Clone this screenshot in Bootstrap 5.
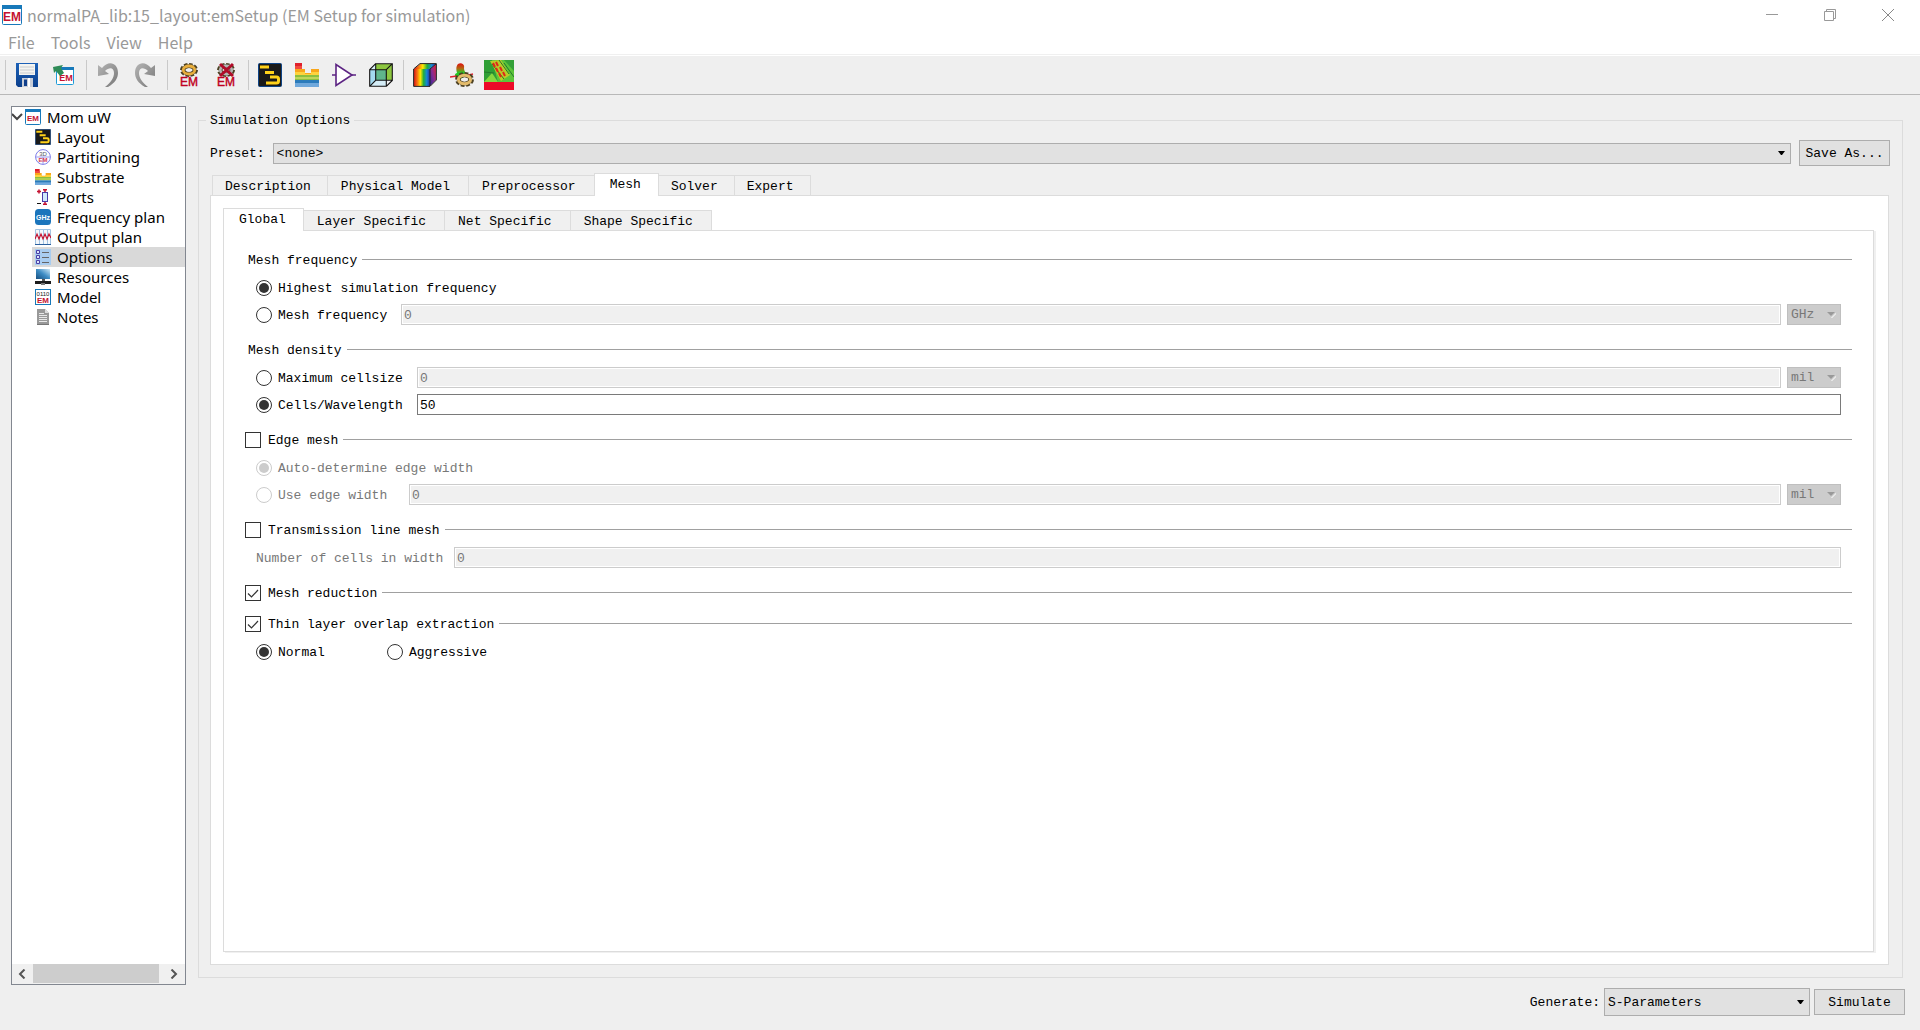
<!DOCTYPE html>
<html lang="en">
<head>
<meta charset="utf-8">
<meta name="viewport" content="width=device-width, initial-scale=1">
<title>normalPA_lib:15_layout:emSetup (EM Setup for simulation)</title>
<link href="https://cdn.jsdelivr.net/npm/bootstrap@5.3.0/dist/css/bootstrap.min.css" rel="stylesheet">
<style>
  :root { --face: #efefef; --edge: #dcdcdc; --ctl: #e1e1e1; --ctl-edge: #adadad; }
  body { background: var(--face); color: #000; font-family: "Noto Sans", "Noto Sans CJK SC", sans-serif; font-size: 15px; line-height: 20px; }
  a { color: inherit; text-decoration: none; }
  svg { display: block; flex: none; }
  svg text { font-family: "Liberation Sans", sans-serif; }

  .titlebar { height: 29px; color: #999; background: #fff; padding: 0 3px 0 2px; gap: 5px; }
  .titlebar, .menubar { font-family: "Noto Sans CJK SC", "Noto Sans", sans-serif; font-size: 16px; }
  .winbtn { width: 58px; height: 28px; border: 0; background: none; color: #999; padding: 0; }
  .menubar { height: 25px; background: #fff; color: #999; padding-left: 8px; gap: 16px; line-height: 26px; }
  .toolstrip { height: 41px; border-top: 1px solid #f0f0f0; border-bottom: 1px solid #b8b8b8; box-shadow: inset 0 1px #fff; padding-left: 5px; }
  .toolstrip .tool { width: 37px; height: 32px; border: 0; background: none; padding: 0; display: flex; align-items: center; justify-content: center; }
  .toolstrip .rule { width: 1px; height: 30px; background: #c9c9c9; margin: 0 2px 0 4px; }
  .toolstrip .rule:first-child { margin-left: 0; }

  .workarea { padding: 11px 15px 14px 11px; gap: 12px; }
  .treebox { width: 175px; background: #fff; border: 1px solid #828790; margin-bottom: 31px; }
  .treebox a, .treebox .root { height: 20px; display: flex; align-items: center; gap: 6px; white-space: nowrap; }
  .treebox .root { gap: 0; }
  .treebox .root svg + svg { margin: 0 6px 0 2px; }
  .treebox a { margin-left: 20px; padding-left: 3px; }
  .treebox a.current { background: #d9d9d9; }
  .hscroll { height: 20px; background: #f0f0f0; }
  .hscroll button { width: 21px; border: 0; background: none; padding: 0 2px 0 0; display: flex; align-items: center; justify-content: center; }
  .hscroll .thumb { background: #cdcdcd; width: 126px; height: 19px; }

  .pixelfont, .pixelfont input, .pixelfont select, .pixelfont button { font-family: "Liberation Mono", "Noto Sans CJK SC", monospace; font-size: 13px; line-height: 18px; }
  fieldset.groupbox { border: 1px solid var(--edge); padding: 0 12px 12px 11px; margin-top: 4px; margin-right: 2px; min-width: 0; }
  .groupbox > legend { float: none; width: auto; font-size: 13px; line-height: 18px; padding: 2px 4px 0; margin: 0 0 10px -4px; }
  .combo { appearance: none; border: 1px solid var(--ctl-edge); border-radius: 0; height: 21px; padding: 1px 16px 0 3px; color: #000;
    background: var(--ctl) url("data:image/svg+xml,%3Csvg xmlns='http://www.w3.org/2000/svg' width='7' height='4'%3E%3Cpath d='M0 0H7L4 4H3Z'/%3E%3C/svg%3E") no-repeat right 5px center; }
  .combo:disabled { background-color: #ccc; border-color: #bfbfbf; color: #787878; opacity: 1; background-image: url("data:image/svg+xml,%3Csvg xmlns='http://www.w3.org/2000/svg' width='9' height='6'%3E%3Cpath d='M4 6L9 1V2L5 6Z' fill='white'/%3E%3Cpath d='M0 0H8L4 4Z' fill='%23999'/%3E%3C/svg%3E"); background-position: right 4px center; }
  .combo.generate { width: 206px; height: 28px; }
  .combo.unit { width: 54px; margin-left: 6px; flex: none; }
  .pushbtn { width: 91px; height: 26px; padding: 2px 0 0; border: 1px solid var(--ctl-edge); background: var(--ctl); color: #000; border-radius: 0; }
  .pixelfont label, .headline span { padding-top: 2px; }

  .tabstrip { border: 0; height: 22px; align-items: flex-end; }
  .tabstrip.outer { margin-top: 7px; padding-left: 2px; }
  .tabstrip .nav-link { border: 1px solid var(--edge); border-bottom: 0; border-radius: 0; background: #f0f0f0; color: #000; padding: 2px 16px 0 12px; height: 20px; margin: 0 0 0 -1px; font-size: 13px; line-height: 18px; }
  .tabstrip .nav-item:first-child .nav-link { margin-left: 0; }
  .tabstrip .nav-link.wide { padding-left: 13px; padding-right: 18px; }
  .tabstrip .nav-link.active { background: #fff; padding: 2px 17px 0 15px; height: 23px; margin-bottom: -1px; position: relative; border-color: var(--edge); }
  .sheet { background: #fff; border: 1px solid var(--edge); }
  .sheet.outer { padding: 12px; margin-right: 1px; }
  .sheet.inner { padding: 20px 21px 0 21px; margin-right: 2px; box-shadow: 2px 1px #f0f0f0; }

  .optgroup { margin-bottom: 13px; }
  .headline { height: 18px; }
  .headline::after { content: ""; flex: 1; height: 1px; background: #a0a0a0; margin: 0 0 1px 5px; }
  .headline.plain { padding-left: 3px; }
  .optrows { padding: 5px 11px 0 11px; }
  .optline { height: 27px; display: flex; align-items: center; }
  .optline label { padding-left: 6px; }
  .optline.off { color: #787878; }
  .len-freq { width: 129px; } .len-cell { width: 145px; } .len-edge { width: 137px; }
  .optline .len-num { width: 198px; padding-left: 0; }
  .len-mode { width: 115px; }
  .field { flex: 1; min-width: 0; height: 21px; border: 1px solid #7a7a7a; border-radius: 0; padding: 1px 2px 0; background: #fff; color: #000; }
  .field:disabled { background: #f0f0f0; border-color: #ccc; box-shadow: inset 0 0 0 1px #fff; color: #787878; }
  .mark-in.form-check-input { width: 16px; height: 16px; margin: 0; flex: none; border: 1px solid #333; background-color: #fff; box-shadow: none; }
  .mark-in[type=checkbox] { border-radius: 0; }
  .headline .mark-in + label { padding-left: 7px; }
  .mark-in[type=radio]:checked { background-color: #fff; background-size: 16px 16px; background-position: center; background-image: url("data:image/svg+xml,%3Csvg xmlns='http://www.w3.org/2000/svg' viewBox='0 0 16 16'%3E%3Ccircle cx='8' cy='8' r='5' fill='%23333'/%3E%3C/svg%3E"); }
  .mark-in[type=checkbox]:checked { background-color: #fff; border-color: #333; background-size: 14px 14px; background-image: url("data:image/svg+xml,%3Csvg xmlns='http://www.w3.org/2000/svg' viewBox='0 0 14 14'%3E%3Cpath d='M2 7.5L5.5 11L12 4' fill='none' stroke='%23333' stroke-width='1.2'/%3E%3C/svg%3E"); }
  .mark-in.form-check-input:disabled { border-color: #ccc; opacity: 1; }
  .mark-in[type=radio]:checked:disabled { background-image: url("data:image/svg+xml,%3Csvg xmlns='http://www.w3.org/2000/svg' viewBox='0 0 16 16'%3E%3Ccircle cx='8' cy='8' r='5' fill='%23ccc'/%3E%3C/svg%3E"); }
  .footbar { margin-top: 10px; gap: 4px; }
</style>
</head>
<body class="min-vh-100 d-flex flex-column">

<svg width="0" height="0" class="position-absolute" aria-hidden="true">
  <defs>
    <linearGradient id="g-blue" x2="0" y2="1"><stop stop-color="#1d62b8"/><stop offset="1" stop-color="#0b3f8c"/></linearGradient>
    <linearGradient id="g-grey" x2="1" y2="1"><stop stop-color="#b5b5b5"/><stop offset="1" stop-color="#777"/></linearGradient>
    <linearGradient id="g-rain"><stop stop-color="#d81818"/><stop offset=".22" stop-color="#f77a10"/><stop offset=".4" stop-color="#ffe800"/><stop offset=".6" stop-color="#1fae3c"/><stop offset=".8" stop-color="#1487d8"/><stop offset="1" stop-color="#2a2a9c"/></linearGradient>
    <linearGradient id="g-side" x1="1" x2="0" y2="1"><stop stop-color="#e02030"/><stop offset=".5" stop-color="#8a2a90"/><stop offset="1" stop-color="#2a2a9c"/></linearGradient>
    <linearGradient id="g-hot" x2="0" y2="1"><stop stop-color="#e01010"/><stop offset=".35" stop-color="#b06a10"/><stop offset=".6" stop-color="#28c828"/><stop offset="1" stop-color="#1ec81e"/></linearGradient>
    <linearGradient id="g-scr" x1="0" y1="1" x2="1" y2="0"><stop stop-color="#174f80"/><stop offset=".5" stop-color="#3d8cc4"/><stop offset="1" stop-color="#cfe9f7"/></linearGradient>
  </defs>
  <symbol id="i-layout" viewBox="0 0 24 24"><rect x=".5" y=".5" width="23" height="23" rx="1" fill="#1a1a1a" stroke="#0d4386"/><path d="M2 4h9M7 9.500h9" stroke="#ffd21a" stroke-width="3"/><path d="M12 14h6.500q2 0 2 2v2q0 2-2 2H8" fill="none" stroke="#ffd21a" stroke-width="3"/></symbol>
  <symbol id="i-sub" viewBox="0 0 24 24"><path d="M0 0h7v6H0z" fill="#e0202c"/><path d="M0 3h7v3H0z" fill="#f04a3e"/><path d="M0 6h10v4h6V6h8v7H0z" fill="#f9a61a"/><path d="M0 9h10v2h6V9h8v3H0z" fill="#ffd23c"/><path d="M0 12h24v5H0z" fill="#8dbf3f"/><path d="M0 14h24v2H0z" fill="#bfd65a"/><path d="M0 17h24v4H0z" fill="#2b7bbb"/><path d="M0 20h24v4H0z" fill="#6fa8dc"/></symbol>
  <symbol id="i-gear" viewBox="0 0 18 14"><ellipse cx="9" cy="7" rx="7" ry="5" fill="none" stroke="#4c4022" stroke-width="4" stroke-dasharray="3.200 1.500"/><ellipse cx="9" cy="7" rx="5.500" ry="3.800" fill="none" stroke="#4c4022" stroke-width="4"/><ellipse cx="9" cy="7" rx="5.800" ry="4" fill="none" stroke="currentColor" stroke-width="2.800"/><ellipse cx="9" cy="7" rx="2.200" ry="1.800" fill="#efefef"/></symbol>
</svg>

<header>
  <div class="titlebar d-flex align-items-center">
    <svg width="20" height="20" viewBox="0 0 20 20"><rect x=".5" y=".5" width="19" height="19" rx="1" fill="#fff" stroke="#1779ba"/><path d="M0 0h20v4H0z" fill="#1779ba"/><text x="10" y="16" font-size="12" font-weight="bold" text-anchor="middle" fill="#c41230">EM</text></svg>
    <span class="me-auto">normalPA_lib:15_layout:emSetup (EM Setup for simulation)</span>
    <div class="d-flex">
      <button class="winbtn" aria-label="Minimize"><svg class="m-auto" width="12" height="12"><path d="M0 5.500h12" stroke="#999"/></svg></button>
      <button class="winbtn" aria-label="Restore"><svg class="m-auto" width="12" height="12"><path d="M.5 2.500h9v9h-9zM2.500 2.500v-2h9v9h-2" fill="none" stroke="#999"/></svg></button>
      <button class="winbtn" aria-label="Close"><svg class="m-auto" width="12" height="12"><path d="M0 0L12 12M12 0L0 12" stroke="#888"/></svg></button>
    </div>
  </div>
  <nav class="menubar d-flex">
    <a href="#">File</a><a href="#">Tools</a><a href="#">View</a><a href="#">Help</a>
  </nav>
  <div class="toolstrip d-flex align-items-center">
    <span class="rule"></span>
    <button class="tool" aria-label="Save"><svg width="24" height="24" viewBox="0 0 24 24"><path d="M1 0h22v24H3l-2-2z" fill="url(#g-blue)"/><path d="M4 1h16v11H4z" fill="#f4f4f0"/><path d="M5 4h14M5 7h14M5 10h14" stroke="#c8ccd0"/><path d="M7 15h11v9H7z" fill="#c9ced8"/><path d="M9 16.500h3V23H9z" fill="#12408c"/><path d="M13 15h2v9h-2z" fill="#fff"/></svg></button>
    <button class="tool" aria-label="Import EM setup"><svg width="24" height="24" viewBox="0 0 24 24"><rect x="4.500" y="4.500" width="17" height="17" rx="1" fill="#fff" stroke="#1c9ad6"/><path d="M4 4h18v3H4z" fill="#1779ba"/><text x="14" y="18" font-size="9" font-weight="bold" text-anchor="middle" fill="#c41230">EM</text><path d="M1 4l10-2-2 3 3 5-4 3-4-5-2 2z" fill="#2e8b57"/></svg></button>
    <span class="rule"></span>
    <button class="tool" aria-label="Undo"><svg width="20" height="24" viewBox="0 0 20 24"><path d="M0 2v11l11-2-4-3c4-4 9-4 9 2 0 5-3 9-9 14h3c7-4 10-9 10-14C20-1 10-3 4 5z" fill="url(#g-grey)"/></svg></button>
    <button class="tool" aria-label="Redo"><svg width="20" height="24" viewBox="0 0 20 24"><path d="M20 2v11L9 11l4-3c-4-4-9-4-9 2 0 5 3 9 9 14h-3C3 20 0 15 0 10 0-1 10-3 16 5z" fill="url(#g-grey)"/></svg></button>
    <span class="rule"></span>
    <button class="tool" aria-label="Simulate"><svg width="20" height="26" viewBox="0 0 20 26"><use href="#i-gear" x="1" y="1" width="18" height="14" color="#e8ae3c"/><text x="10" y="24" font-size="12" text-anchor="middle" fill="#c00020" stroke="#c00020" stroke-width=".4">EM</text></svg></button>
    <button class="tool" aria-label="Stop simulation"><svg width="20" height="26" viewBox="0 0 20 26"><use href="#i-gear" x="1" y="1" width="18" height="14" color="#b4b4b4"/><path d="M4 2l13 12M17 2L4 14" stroke="#b00c28" stroke-width="3"/><text x="10" y="24" font-size="12" text-anchor="middle" fill="#c00020" stroke="#c00020" stroke-width=".4">EM</text></svg></button>
    <span class="rule"></span>
    <button class="tool" aria-label="Layout"><svg width="24" height="24"><use href="#i-layout"/></svg></button>
    <button class="tool" aria-label="Substrate"><svg width="24" height="24"><use href="#i-sub"/></svg></button>
    <button class="tool" aria-label="Component"><svg width="24" height="24" viewBox="0 0 24 24"><path d="M4 1.500v21L20 12z" fill="#fff" stroke="#5c2483" stroke-width="1.600"/><path d="M0 12h4M20 12h4" stroke="#5c2483" stroke-width="1.500"/></svg></button>
    <button class="tool" aria-label="3D view"><svg width="24" height="24" viewBox="0 0 24 24"><path d="M1 7h16v16H1z" fill="#a3d9ef"/><path d="M7 1h16v16H7z" fill="#8cc63f"/><path d="M7 7h10v10H7z" fill="#5fb58b"/><path d="M1 7l6-6v6zM1 23l6-6h10v6z" fill="#d5edf7"/><path d="M.7 6.700h16.600v16.600H.7zM6.500.7h16.800v16.800l-6 5.800M.7 6.700l6-6M17.300 6.700l6-6M.7 23.300l6-6h16.600M6.700.7v16.600" fill="none" stroke="#111" stroke-width="1.100"/></svg></button>
    <span class="rule"></span>
    <button class="tool" aria-label="Far field"><svg width="24" height="24" viewBox="0 0 24 24"><path d="M1 6L7 1h16l-6 5z" fill="url(#g-rain)"/><path d="M17 6l6-5v16l-6 6z" fill="url(#g-side)"/><path d="M1 6h16v17H1z" fill="url(#g-rain)"/><path d="M.6 6L7 .6h16.400V17L17 23.400H.6zM17 6v17M17 6l6-5" fill="none" stroke="#222"/></svg></button>
    <button class="tool" aria-label="Visualization setup"><svg width="24" height="24" viewBox="0 0 24 24"><path d="M6 15c-2-2-1-5 1-5-1-3-1-7 1-9 3-2 7 0 6 4 0 3 1 3 2 6-1 4-7 6-10 4z" fill="url(#g-hot)"/><path d="M0 14l7-1M15 13l8-2" stroke="#e02030" stroke-width="1.500"/><use href="#i-gear" x="5" y="9" width="19" height="15" color="#e3bb6b"/></svg></button>
    <button class="tool" aria-label="Field plot"><svg width="30" height="30" viewBox="0 0 30 30"><path d="M0 0h30v22H0z" fill="#5cc43a"/><path d="M0 0h8l6 22H0z" fill="#2f9f36"/><path d="M0 22l8-9 6 9z" fill="#86d840"/><path d="M6 1l11-1 9 15-9 6z" fill="#b8cc28"/><path d="M20 0h10v11z" fill="#34a038"/><path d="M8 4l12 15M15 0l10 14M0 12l10 1M20 3l10 14" stroke="#237a2c" fill="none"/><path d="M9 3l2 4M12 2l2 4M12 8l2 4M16 7l2 4M15 13l2 4M19 12l2 4" stroke="#e02818" stroke-width="2"/><path d="M0 22h30v8H0z" fill="#ec0a28"/></svg></button>
  </div>
</header>

<main class="workarea d-flex flex-grow-1">
  <aside class="treebox d-flex flex-column flex-shrink-0">
    <div class="root"><svg width="11" height="16" viewBox="0 0 11 16"><path d="M0 5l5 5 5-5" fill="none" stroke="#444" stroke-width="2"/></svg><svg width="16" height="16" viewBox="0 0 16 16"><rect x=".5" y=".5" width="15" height="15" rx="1" fill="#fff" stroke="#1779ba"/><path d="M0 0h16v3H0z" fill="#1779ba"/><text x="8" y="12" font-size="8" font-weight="bold" text-anchor="middle" fill="#c41230">EM</text></svg>Mom uW</div>
    <nav class="d-flex flex-column flex-grow-1">
      <a href="#"><svg width="16" height="16"><use href="#i-layout"/></svg>Layout</a>
      <a href="#"><svg width="16" height="16" viewBox="0 0 16 16"><circle cx="8" cy="8" r="7.400" fill="#fff" stroke="#7c7ce8"/><path d="M1 8h14M8 8v7" stroke="#9a9af0"/><text x="8" y="7" font-size="6" text-anchor="middle" fill="#556">3D</text><text x="8" y="13" font-size="6" font-weight="bold" text-anchor="middle" fill="#d83a4e">EM</text></svg>Partitioning</a>
      <a href="#"><svg width="16" height="16"><use href="#i-sub"/></svg>Substrate</a>
      <a href="#"><svg width="16" height="16" viewBox="0 0 16 16"><path d="M2 2.500h4M4 .5v4M8 .8h4M10 1v2M8 15.200h4M10 13v2" stroke="#c41230" stroke-width="1.500"/><path d="M2 14.500h4" stroke="#111"/><rect x="7.500" y="3.500" width="5" height="9" fill="#cfe9fb" stroke="#4a3aa8" /></svg>Ports</a>
      <a href="#"><svg width="16" height="16" viewBox="0 0 16 16"><rect width="16" height="16" rx="3.500" fill="#1b75bc"/><text x="8" y="11" font-size="7" font-weight="bold" text-anchor="middle" fill="#fff">GHz</text></svg>Frequency plan</a>
      <a href="#"><svg width="16" height="16" viewBox="0 0 16 16"><path d="M.5.5h15v15H.5zM4.500 0v16M8.500 0v16M12.500 0v16" fill="#f4f8fc" stroke="#a3c4e2"/><path d="M0 15.500h16" stroke="#2b5f9e"/><path d="M0 10l2-5 2 5 2-5 2 5 2-5 2 5 2-5 2 4" fill="none" stroke="#c41230" stroke-width="1.200"/></svg>Output plan</a>
      <a href="#" class="current"><svg width="16" height="16" viewBox="0 0 16 16"><path d="M0 0h16v16H0z" fill="#a9cdf0"/><path d="M1.500 1.500h3v3h-3zM1.500 6.500h3v3h-3zM1.500 11.500h3v3h-3z" fill="#d8e6fa" stroke="#4b3fa8"/><path d="M7 3.500h7M7 8.500h7M7 13.500h7" stroke="#666"/></svg>Options</a>
      <a href="#"><svg width="16" height="16" viewBox="0 0 16 16"><path d="M1 0h14v10H1z" fill="url(#g-scr)"/><path d="M7 10h3v3H7z" fill="#555"/><path d="M0 12h16v3H0z" fill="#1c1c1c"/><path d="M6 14h4v2H6z" fill="#777"/></svg>Resources</a>
      <a href="#"><svg width="16" height="16" viewBox="0 0 16 16"><rect x=".5" y=".5" width="15" height="15" fill="#fff" stroke="#1779ba"/><text x="8" y="7" font-size="6" text-anchor="middle" fill="#222">0110</text><text x="8" y="14" font-size="8" font-weight="bold" text-anchor="middle" fill="#c41230">EM</text></svg>Model</a>
      <a href="#"><svg width="16" height="16" viewBox="0 0 16 16"><path d="M2 0h8l4 4v12H2z" fill="#999"/><path d="M10 0v4h4z" fill="#dedede"/><path d="M4 4.500h5M4 6.500h8M4 8.500h8M4 10.500h8M4 12.500h8" stroke="#e8e8e8"/><path d="M2 15.500h12" stroke="#777"/></svg>Notes</a>
    </nav>
    <div class="hscroll d-flex">
      <button aria-label="Scroll left"><svg width="8" height="10" viewBox="0 0 8 10"><path d="M6.500 .5L2 5l4.500 4.500" fill="none" stroke="#555" stroke-width="2"/></svg></button>
      <div class="thumb"></div>
      <button class="ms-auto" aria-label="Scroll right"><svg width="8" height="10" viewBox="0 0 8 10"><path d="M1.500 .5L6 5 1.500 9.500" fill="none" stroke="#555" stroke-width="2"/></svg></button>
    </div>
  </aside>

  <section class="pixelfont d-flex flex-column flex-grow-1">
    <fieldset class="groupbox d-flex flex-column flex-grow-1">
      <legend>Simulation Options</legend>
      <div class="d-flex align-items-center">
        <label for="preset" class="me-1">Preset:</label>
        <select id="preset" class="combo flex-grow-1 ms-1 me-2"><option>&lt;none&gt;</option></select>
        <button class="pushbtn">Save As...</button>
      </div>

      <ul class="nav nav-tabs tabstrip outer">
        <li class="nav-item"><a class="nav-link" href="#">Description</a></li>
        <li class="nav-item"><a class="nav-link wide" href="#">Physical Model</a></li>
        <li class="nav-item"><a class="nav-link wide" href="#">Preprocessor</a></li>
        <li class="nav-item"><a class="nav-link active" href="#">Mesh</a></li>
        <li class="nav-item"><a class="nav-link" href="#">Solver</a></li>
        <li class="nav-item"><a class="nav-link" href="#">Expert</a></li>
      </ul>
      <div class="sheet outer d-flex flex-column flex-grow-1">
        <ul class="nav nav-tabs tabstrip">
          <li class="nav-item"><a class="nav-link active" href="#">Global</a></li>
          <li class="nav-item"><a class="nav-link wide" href="#">Layer Specific</a></li>
          <li class="nav-item"><a class="nav-link wide" href="#">Net Specific</a></li>
          <li class="nav-item"><a class="nav-link wide" href="#">Shape Specific</a></li>
        </ul>
        <form class="sheet inner flex-grow-1">
          <div class="optgroup">
            <div class="headline plain d-flex align-items-center"><span>Mesh frequency</span></div>
            <div class="optrows">
              <div class="optline"><input class="form-check-input mark-in" type="radio" name="freq" id="f1" checked><label for="f1">Highest simulation frequency</label></div>
              <div class="optline"><input class="form-check-input mark-in" type="radio" name="freq" id="f2"><label class="len-freq" for="f2">Mesh frequency</label><input class="field" type="text" value="0" aria-label="Mesh frequency value" disabled><select class="combo unit" aria-label="Frequency unit" disabled><option>GHz</option></select></div>
            </div>
          </div>
          <div class="optgroup">
            <div class="headline plain d-flex align-items-center"><span>Mesh density</span></div>
            <div class="optrows">
              <div class="optline"><input class="form-check-input mark-in" type="radio" name="dens" id="d1"><label class="len-cell" for="d1">Maximum cellsize</label><input class="field" type="text" value="0" aria-label="Maximum cellsize value" disabled><select class="combo unit" aria-label="Cellsize unit" disabled><option>mil</option></select></div>
              <div class="optline"><input class="form-check-input mark-in" type="radio" name="dens" id="d2" checked><label class="len-cell" for="d2">Cells/Wavelength</label><input class="field" type="text" value="50" aria-label="Cells per wavelength value"></div>
            </div>
          </div>
          <div class="optgroup">
            <div class="headline d-flex align-items-center"><input class="form-check-input mark-in" type="checkbox" id="edge"><label for="edge">Edge mesh</label></div>
            <div class="optrows">
              <div class="optline off"><input class="form-check-input mark-in" type="radio" name="ew" id="e1" checked disabled><label for="e1">Auto-determine edge width</label></div>
              <div class="optline off"><input class="form-check-input mark-in" type="radio" name="ew" id="e2" disabled><label class="len-edge" for="e2">Use edge width</label><input class="field" type="text" value="0" aria-label="Edge width value" disabled><select class="combo unit" aria-label="Edge width unit" disabled><option>mil</option></select></div>
            </div>
          </div>
          <div class="optgroup">
            <div class="headline d-flex align-items-center"><input class="form-check-input mark-in" type="checkbox" id="tl"><label for="tl">Transmission line mesh</label></div>
            <div class="optrows">
              <div class="optline off"><label class="len-num" for="ncell">Number of cells in width</label><input class="field" type="text" id="ncell" value="0" disabled></div>
            </div>
          </div>
          <div class="optgroup">
            <div class="headline d-flex align-items-center"><input class="form-check-input mark-in" type="checkbox" id="red" checked><label for="red">Mesh reduction</label></div>
          </div>
          <div class="optgroup">
            <div class="headline d-flex align-items-center"><input class="form-check-input mark-in" type="checkbox" id="thin" checked><label for="thin">Thin layer overlap extraction</label></div>
            <div class="optrows">
              <div class="optline"><input class="form-check-input mark-in" type="radio" name="mode" id="m1" checked><label class="len-mode" for="m1">Normal</label><input class="form-check-input mark-in" type="radio" name="mode" id="m2"><label for="m2">Aggressive</label></div>
            </div>
          </div>
        </form>
      </div>
    </fieldset>
    <div class="footbar d-flex align-items-center justify-content-end">
      <label for="gen">Generate:</label>
      <select id="gen" class="combo generate"><option>S-Parameters</option></select>
      <button class="pushbtn">Simulate</button>
    </div>
  </section>
</main>

<script src="https://cdn.jsdelivr.net/npm/bootstrap@5.3.0/dist/js/bootstrap.bundle.min.js"></script>
</body>
</html>
